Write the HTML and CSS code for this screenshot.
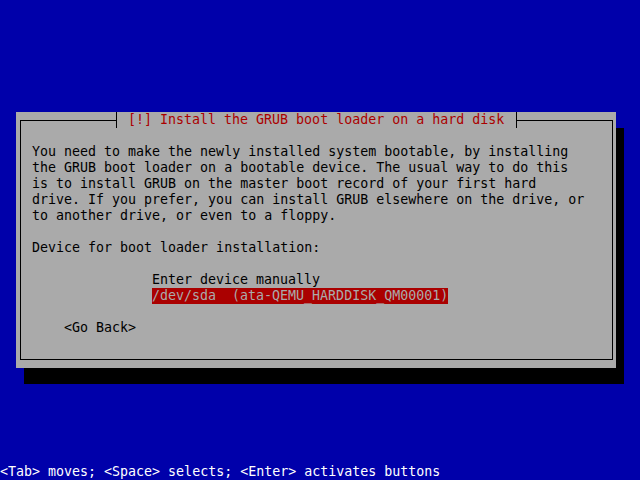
FILE: index.html
```html
<!DOCTYPE html>
<html>
<head>
<meta charset="utf-8">
<link rel="stylesheet" href="styles.css">
</head>
<body>
<div class="screen">
  <div class="dialog">
    <fieldset class="frame">
      <legend class="title">[!] Install the GRUB boot loader on a hard disk</legend>
      <p class="text">You need to make the newly installed system bootable, by installing<br>the GRUB boot loader on a bootable device. The usual way to do this<br>is to install GRUB on the master boot record of your first hard<br>drive. If you prefer, you can install GRUB elsewhere on the drive, or<br>to another drive, or even to a floppy.</p>
      <p class="text question">Device for boot loader installation:</p>
      <ul class="choices">
        <li class="choice">Enter device manually</li>
        <li class="choice selected">/dev/sda  (ata-QEMU_HARDDISK_QM00001)</li>
      </ul>
      <div class="buttons"><span class="button">&lt;Go Back&gt;</span></div>
    </fieldset>
  </div>
  <div class="status">&lt;Tab&gt; moves; &lt;Space&gt; selects; &lt;Enter&gt; activates buttons</div>
</div>
</body>
</html>
```

FILE: styles.css
```css
html, body {
  margin: 0;
  padding: 0;
  background: #0000aa;
}
body {
  font-family: "DejaVu Sans Mono", "Liberation Mono", monospace;
  font-size: 13.3px;
  line-height: 16px;
  color: #000;
}
.screen {
  width: 640px;
  height: 480px;
  display: flex;
  flex-direction: column;
  background: #0000aa;
  overflow: hidden;
}
.dialog {
  margin: 112px 0 0 16px;
  width: 600px;
  height: 256px;
  box-sizing: border-box;
  padding: 0 3px 8px 4px;
  background: #aaaaaa;
  box-shadow: 8px 16px 0 #000;
}
.frame {
  margin: 0;
  padding: 16px 0 0 11px;
  height: 248px;
  box-sizing: border-box;
  border: 1px solid #000;
  min-width: 0;
}
.title {
  margin-left: 84px;
  padding: 0 12px 0 11px;
  height: 16px;
  line-height: 16px;
  border-left: 1px solid #000;
  border-right: 1px solid #000;
  color: #aa0000;
  white-space: pre;
}
.text {
  margin: 0;
  white-space: pre;
}
.question {
  margin-top: 16px;
}
.choices {
  list-style: none;
  margin: 16px 0 0 120px;
  padding: 0;
}
.choice {
  white-space: pre;
  height: 16px;
}
.selected {
  display: inline-block;
  vertical-align: top;
  background: #aa0000;
  color: #aaaaaa;
}
.buttons {
  margin: 16px 0 0 32px;
}
.status {
  margin-top: auto;
  height: 16px;
  color: #ffffff;
  white-space: pre;
}
```
